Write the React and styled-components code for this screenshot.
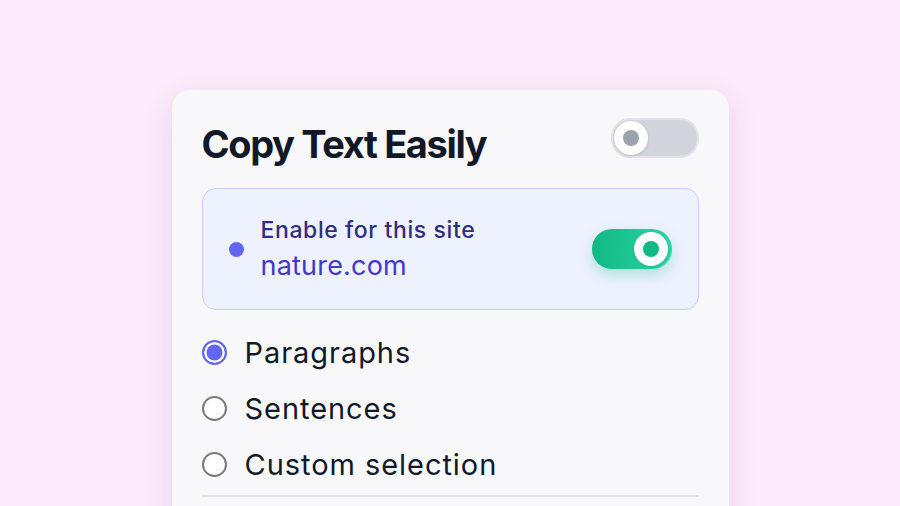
import React, { useState } from "react";
import styled, { createGlobalStyle } from "styled-components";

const GlobalStyle = createGlobalStyle`
  html, body {
    margin: 0;
    padding: 0;
    background: #fcebfb;
    font-family: Inter, "Noto Sans", sans-serif;
  }
`;

const Page = styled.div`
  display: flex;
  justify-content: center;
  padding-top: 90px;
  height: 416px;
  overflow: hidden;
`;

const Card = styled.div`
  width: 557px;
  box-sizing: border-box;
  padding: 28px 30px 30px;
  background: #f8f8fa;
  border-radius: 18px;
  box-shadow: 0 10px 30px rgba(120, 40, 110, 0.14);
  height: 460px;
`;

const Header = styled.div`
  display: flex;
  justify-content: space-between;
  align-items: flex-start;
`;

const Title = styled.h1`
  margin: 0;
  font-size: 38px;
  line-height: 52px;
  font-weight: 700;
  letter-spacing: -0.036em;
  color: #111827;
`;

const Switch = styled.button`
  position: relative;
  flex: none;
  width: ${(p) => p.$w}px;
  height: 40px;
  padding: 0;
  border: none;
  border-radius: 20px;
  cursor: pointer;
  background: ${(p) =>
    p.$on ? "linear-gradient(90deg, #10b981, #2dd4a7)" : "#d1d5db"};
  box-shadow: ${(p) =>
    p.$on
      ? "0 6px 14px rgba(16, 185, 129, 0.28)"
      : "inset 0 0 0 2px #e2e4e9"};
`;

const Knob = styled.span`
  position: absolute;
  top: 3px;
  left: ${(p) => (p.$on ? "auto" : "3px")};
  right: ${(p) => (p.$on ? "4px" : "auto")};
  width: 34px;
  height: 34px;
  border-radius: 50%;
  background: #fff;
  box-shadow: 0 1px 3px rgba(0, 0, 0, 0.12);
  display: flex;
  align-items: center;
  justify-content: center;

  &::after {
    content: "";
    width: 16px;
    height: 16px;
    border-radius: 50%;
    background: ${(p) => (p.$on ? "#10b981" : "#9ca3af")};
  }
`;

const SiteBox = styled.div`
  margin-top: 18px;
  display: flex;
  align-items: center;
  padding: 26px;
  background: #eef1fe;
  border: 1.5px solid #c3cdfc;
  border-radius: 14px;
`;

const Dot = styled.span`
  flex: none;
  width: 15px;
  height: 15px;
  border-radius: 50%;
  background: #6366f1;
  margin-right: 17px;
`;

const SiteText = styled.div`
  flex: 1;
  display: flex;
  flex-direction: column;
  gap: 4px;
`;

const SiteLabel = styled.span`
  font-size: 23px;
  line-height: 30px;
  font-weight: 500;
  letter-spacing: 0.6px;
  color: #312e81;
`;

const SiteName = styled.span`
  font-size: 27px;
  line-height: 34px;
  letter-spacing: 0.2px;
  color: #4338ca;
`;

const Options = styled.div`
  margin-top: 14px;
  display: flex;
  flex-direction: column;
`;

const Option = styled.label`
  display: flex;
  align-items: center;
  height: 56px;
  gap: 18px;
  font-size: 29px;
  letter-spacing: 0.95px;
  color: #111827;
  cursor: pointer;
`;

const Radio = styled.input`
  appearance: none;
  flex: none;
  margin: 0;
  box-sizing: border-box;
  width: 25px;
  height: 25px;
  border-radius: 50%;
  border: 2px solid #7b7b7b;
  background: #fff;
  cursor: pointer;

  &:checked {
    border-color: #6366f1;
    background: #6366f1;
    box-shadow: inset 0 0 0 2.5px #fff;
  }
`;

const Divider = styled.hr`
  margin: 3px 0 0;
  border: none;
  border-top: 2px solid #e3e4e8;
`;

const MODES = ["Paragraphs", "Sentences", "Custom selection"];

export default function App() {
  const [global, setGlobal] = useState(false);
  const [site, setSite] = useState(true);
  const [mode, setMode] = useState("Paragraphs");

  return (
    <>
      <GlobalStyle />
      <Page>
        <Card>
          <Header>
            <Title>Copy Text Easily</Title>
            <Switch $w={88} $on={global} onClick={() => setGlobal(!global)}>
              <Knob $on={global} />
            </Switch>
          </Header>
          <SiteBox>
            <Dot />
            <SiteText>
              <SiteLabel>Enable for this site</SiteLabel>
              <SiteName>nature.com</SiteName>
            </SiteText>
            <Switch $w={80} $on={site} onClick={() => setSite(!site)}>
              <Knob $on={site} />
            </Switch>
          </SiteBox>
          <Options>
            {MODES.map((m) => (
              <Option key={m}>
                <Radio
                  type="radio"
                  name="mode"
                  checked={mode === m}
                  onChange={() => setMode(m)}
                />
                {m}
              </Option>
            ))}
          </Options>
          <Divider />
        </Card>
      </Page>
    </>
  );
}
